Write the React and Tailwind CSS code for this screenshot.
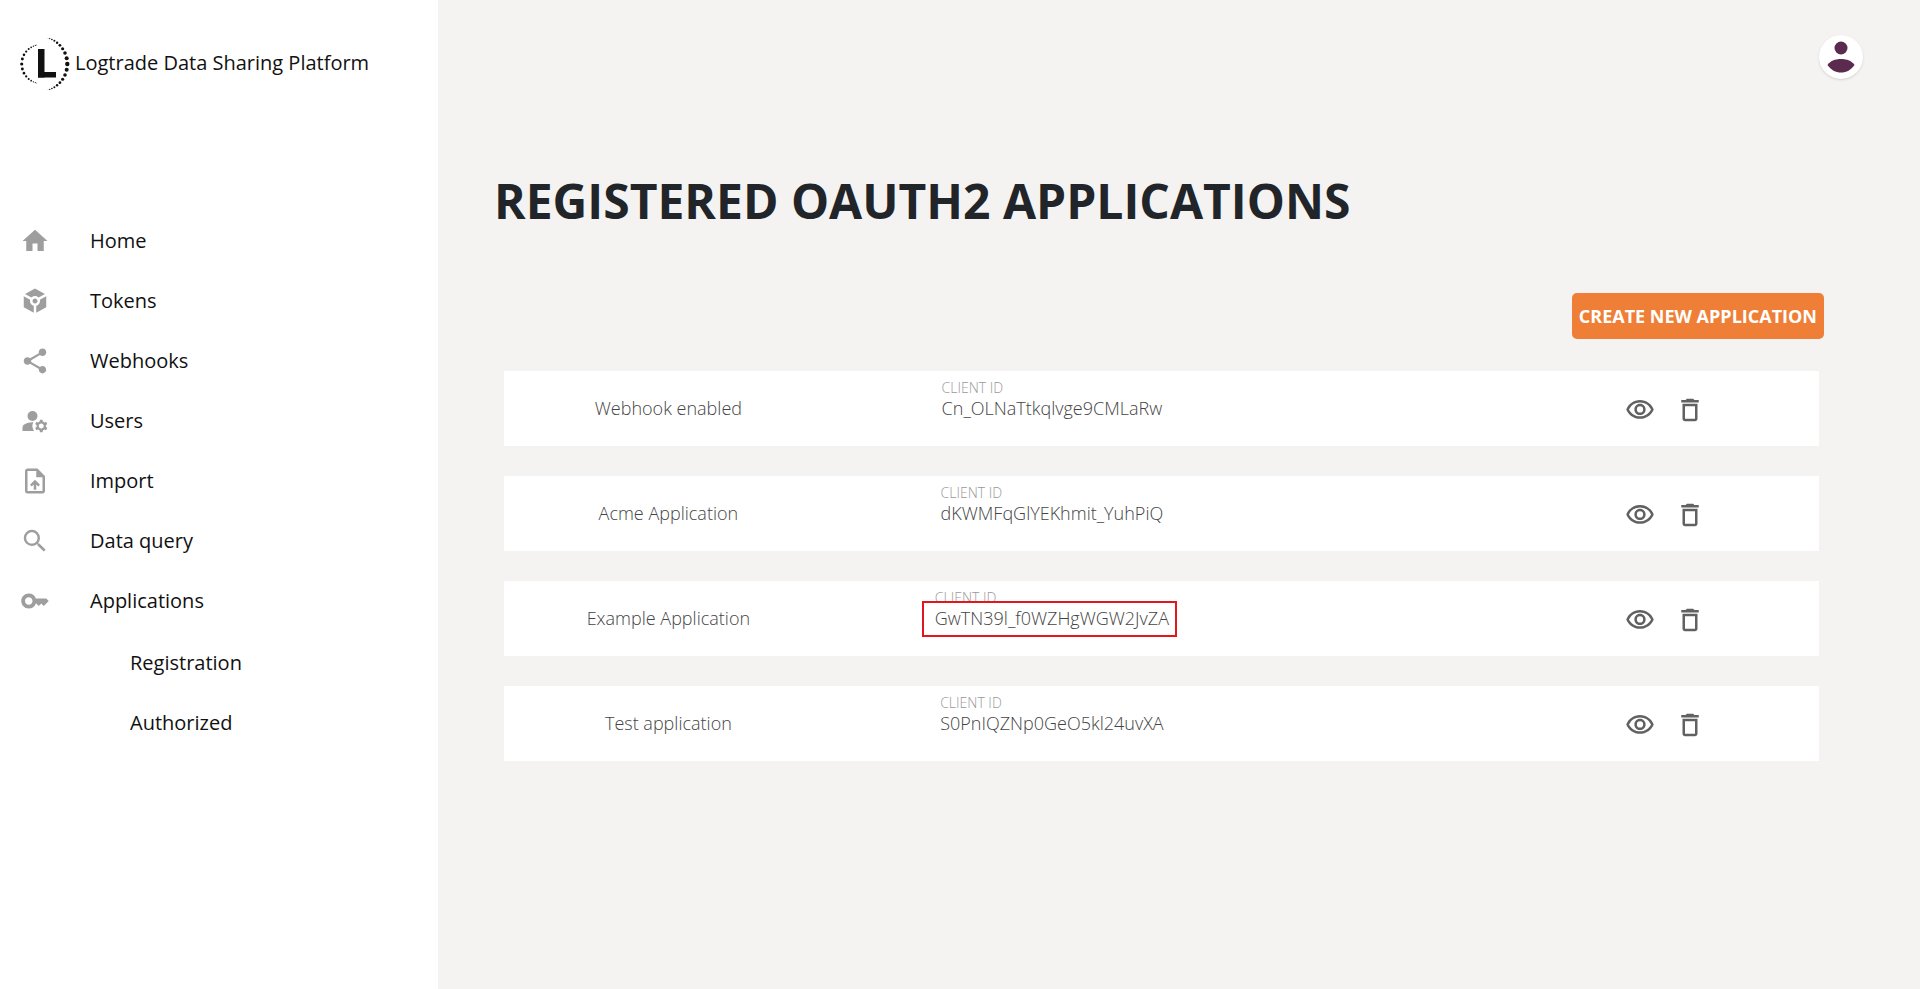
import {
  MdHome, MdToken, MdShare, MdManageAccounts, MdUploadFile, MdSearch, MdKey,
  MdOutlineVisibility, MdOutlineDelete,
} from 'react-icons/md';

const NAV = [
  { label: 'Home', Icon: MdHome },
  { label: 'Tokens', Icon: MdToken },
  { label: 'Webhooks', Icon: MdShare },
  { label: 'Users', Icon: MdManageAccounts },
  { label: 'Import', Icon: MdUploadFile },
  { label: 'Data query', Icon: MdSearch },
  { label: 'Applications', Icon: MdKey, children: ['Registration', 'Authorized'] },
];

const APPS = [
  { name: 'Webhook enabled', clientId: 'Cn_OLNaTtkqlvge9CMLaRw' },
  { name: 'Acme Application', clientId: 'dKWMFqGlYEKhmit_YuhPiQ' },
  { name: 'Example Application', clientId: 'GwTN39l_f0WZHgWGW2JvZA', highlighted: true },
  { name: 'Test application', clientId: 'S0PnIQZNp0GeO5kl24uvXA' },
];

// Dots along an arc, largest at the middle and fading towards both ends.
function arcDots(cx, cy, r, to, perSide, maxRadius, mirror) {
  const dots = [];
  for (let i = -perSide; i <= perSide; i += 1) {
    const t = Math.abs(i) / perSide;
    // Steps shrink towards the ends so that the small dots stay close together.
    const angle = (Math.sign(i) * to * (1.6 * t - 0.6 * t * t) * Math.PI) / 180;
    dots.push({
      x: cx + mirror * r * Math.cos(angle),
      y: cy + r * Math.sin(angle),
      size: 0.4 + (maxRadius - 0.4) * (1 - t),
    });
  }
  return dots;
}

const LOGO_DOTS = [
  ...arcDots(20.1, 26, 27.2, 73, 9, 2.2, 1),
  ...arcDots(21.2, 26, 19.5, 77, 8, 1.6, -1),
];

function Logo() {
  return (
    <svg viewBox="0 0 52 52" className="h-13 w-13 shrink-0" fill="#111" aria-hidden="true">
      {LOGO_DOTS.map((d, i) => (
        <circle key={i} cx={d.x} cy={d.y} r={d.size} />
      ))}
      <rect x="18" y="11" width="6.500" height="28.500" />
      <rect x="18" y="34" width="18" height="5.500" />
    </svg>
  );
}

function Sidebar() {
  return (
    <aside className="w-[438px] shrink-0 bg-white text-xl text-[#111]">
      <div className="flex items-center pt-[38px] pl-5">
        <Logo />
        <span className="-mt-0.5 pl-[3px]">Logtrade Data Sharing Platform</span>
      </div>
      <nav className="pt-[121px]">
        <ul>
          {NAV.map(({ label, Icon, children }) => (
            <li key={label}>
              <a href="#" className="flex h-15 items-center pl-5">
                <Icon className="size-[30px] text-[#9e9e9e]" aria-hidden="true" />
                <span className="pl-10">{label}</span>
              </a>
              {children && (
                <ul className="pt-0.5">
                  {children.map((child) => (
                    <li key={child}>
                      <a href="#" className="flex h-15 items-center pl-[130px]">{child}</a>
                    </li>
                  ))}
                </ul>
              )}
            </li>
          ))}
        </ul>
      </nav>
    </aside>
  );
}

function AppCard({ name, clientId, highlighted }) {
  return (
    <li className="grid h-[75px] grid-cols-12 items-center bg-white text-lg font-light text-[#444]">
      <span className="col-span-3 pb-0.5 text-center">{name}</span>
      <div className="col-span-4 flex justify-center">
        <div className="pb-[22px]">
          <div className="text-sm leading-5 text-[#999]">CLIENT ID</div>
          <div className="relative leading-5">
            {highlighted && (
              <div className="absolute -top-[7px] -right-2 -bottom-[9px] -left-[13px] border-2 border-[#e3171b] bg-white" />
            )}
            <span className="relative">{clientId}</span>
          </div>
        </div>
      </div>
      <div className="col-span-3 col-start-10 flex justify-center gap-5 pt-0.5 pl-5 text-[#616161]">
        <button type="button" aria-label={`View ${name}`}>
          <MdOutlineVisibility className="size-[30px]" />
        </button>
        <button type="button" aria-label={`Delete ${name}`}>
          <MdOutlineDelete className="size-[30px]" />
        </button>
      </div>
    </li>
  );
}

export default function App() {
  return (
    <div className="flex min-h-screen bg-[#f4f3f1] font-['Open_Sans',sans-serif]">
      <Sidebar />
      <main className="min-w-0 flex-1 pr-[101px] pl-14">
        <header className="-mr-11 flex justify-end pt-[35px]">
          <button
            type="button"
            aria-label="Account"
            className="flex size-11 items-center justify-center rounded-full bg-white shadow-sm"
          >
            <svg viewBox="0 0 44 44" className="size-11" fill="#5b2a4f" aria-hidden="true">
              <circle cx="22" cy="13" r="6.5" />
              <path d="M8.500 30C11 26 16 24 22 24s11 2 13.500 6C32 35 27.500 37.500 22 37.500S12 35 8.500 30z" />
            </svg>
          </button>
        </header>
        <h1 className="pt-[89px] text-5xl leading-[66px] font-bold text-[#212529]">
          REGISTERED OAUTH2 APPLICATIONS
        </h1>
        <div className="-mr-[5px] flex justify-end pt-[59px]">
          <button
            type="button"
            className="h-[46px] rounded-[5px] bg-[#ef7f37] px-[7px] text-lg font-bold text-white"
          >
            CREATE NEW APPLICATION
          </button>
        </div>
        <ul className="flex flex-col gap-[30px] pt-8 pl-2.5">
          {APPS.map((app) => (
            <AppCard key={app.clientId} {...app} />
          ))}
        </ul>
      </main>
    </div>
  );
}
